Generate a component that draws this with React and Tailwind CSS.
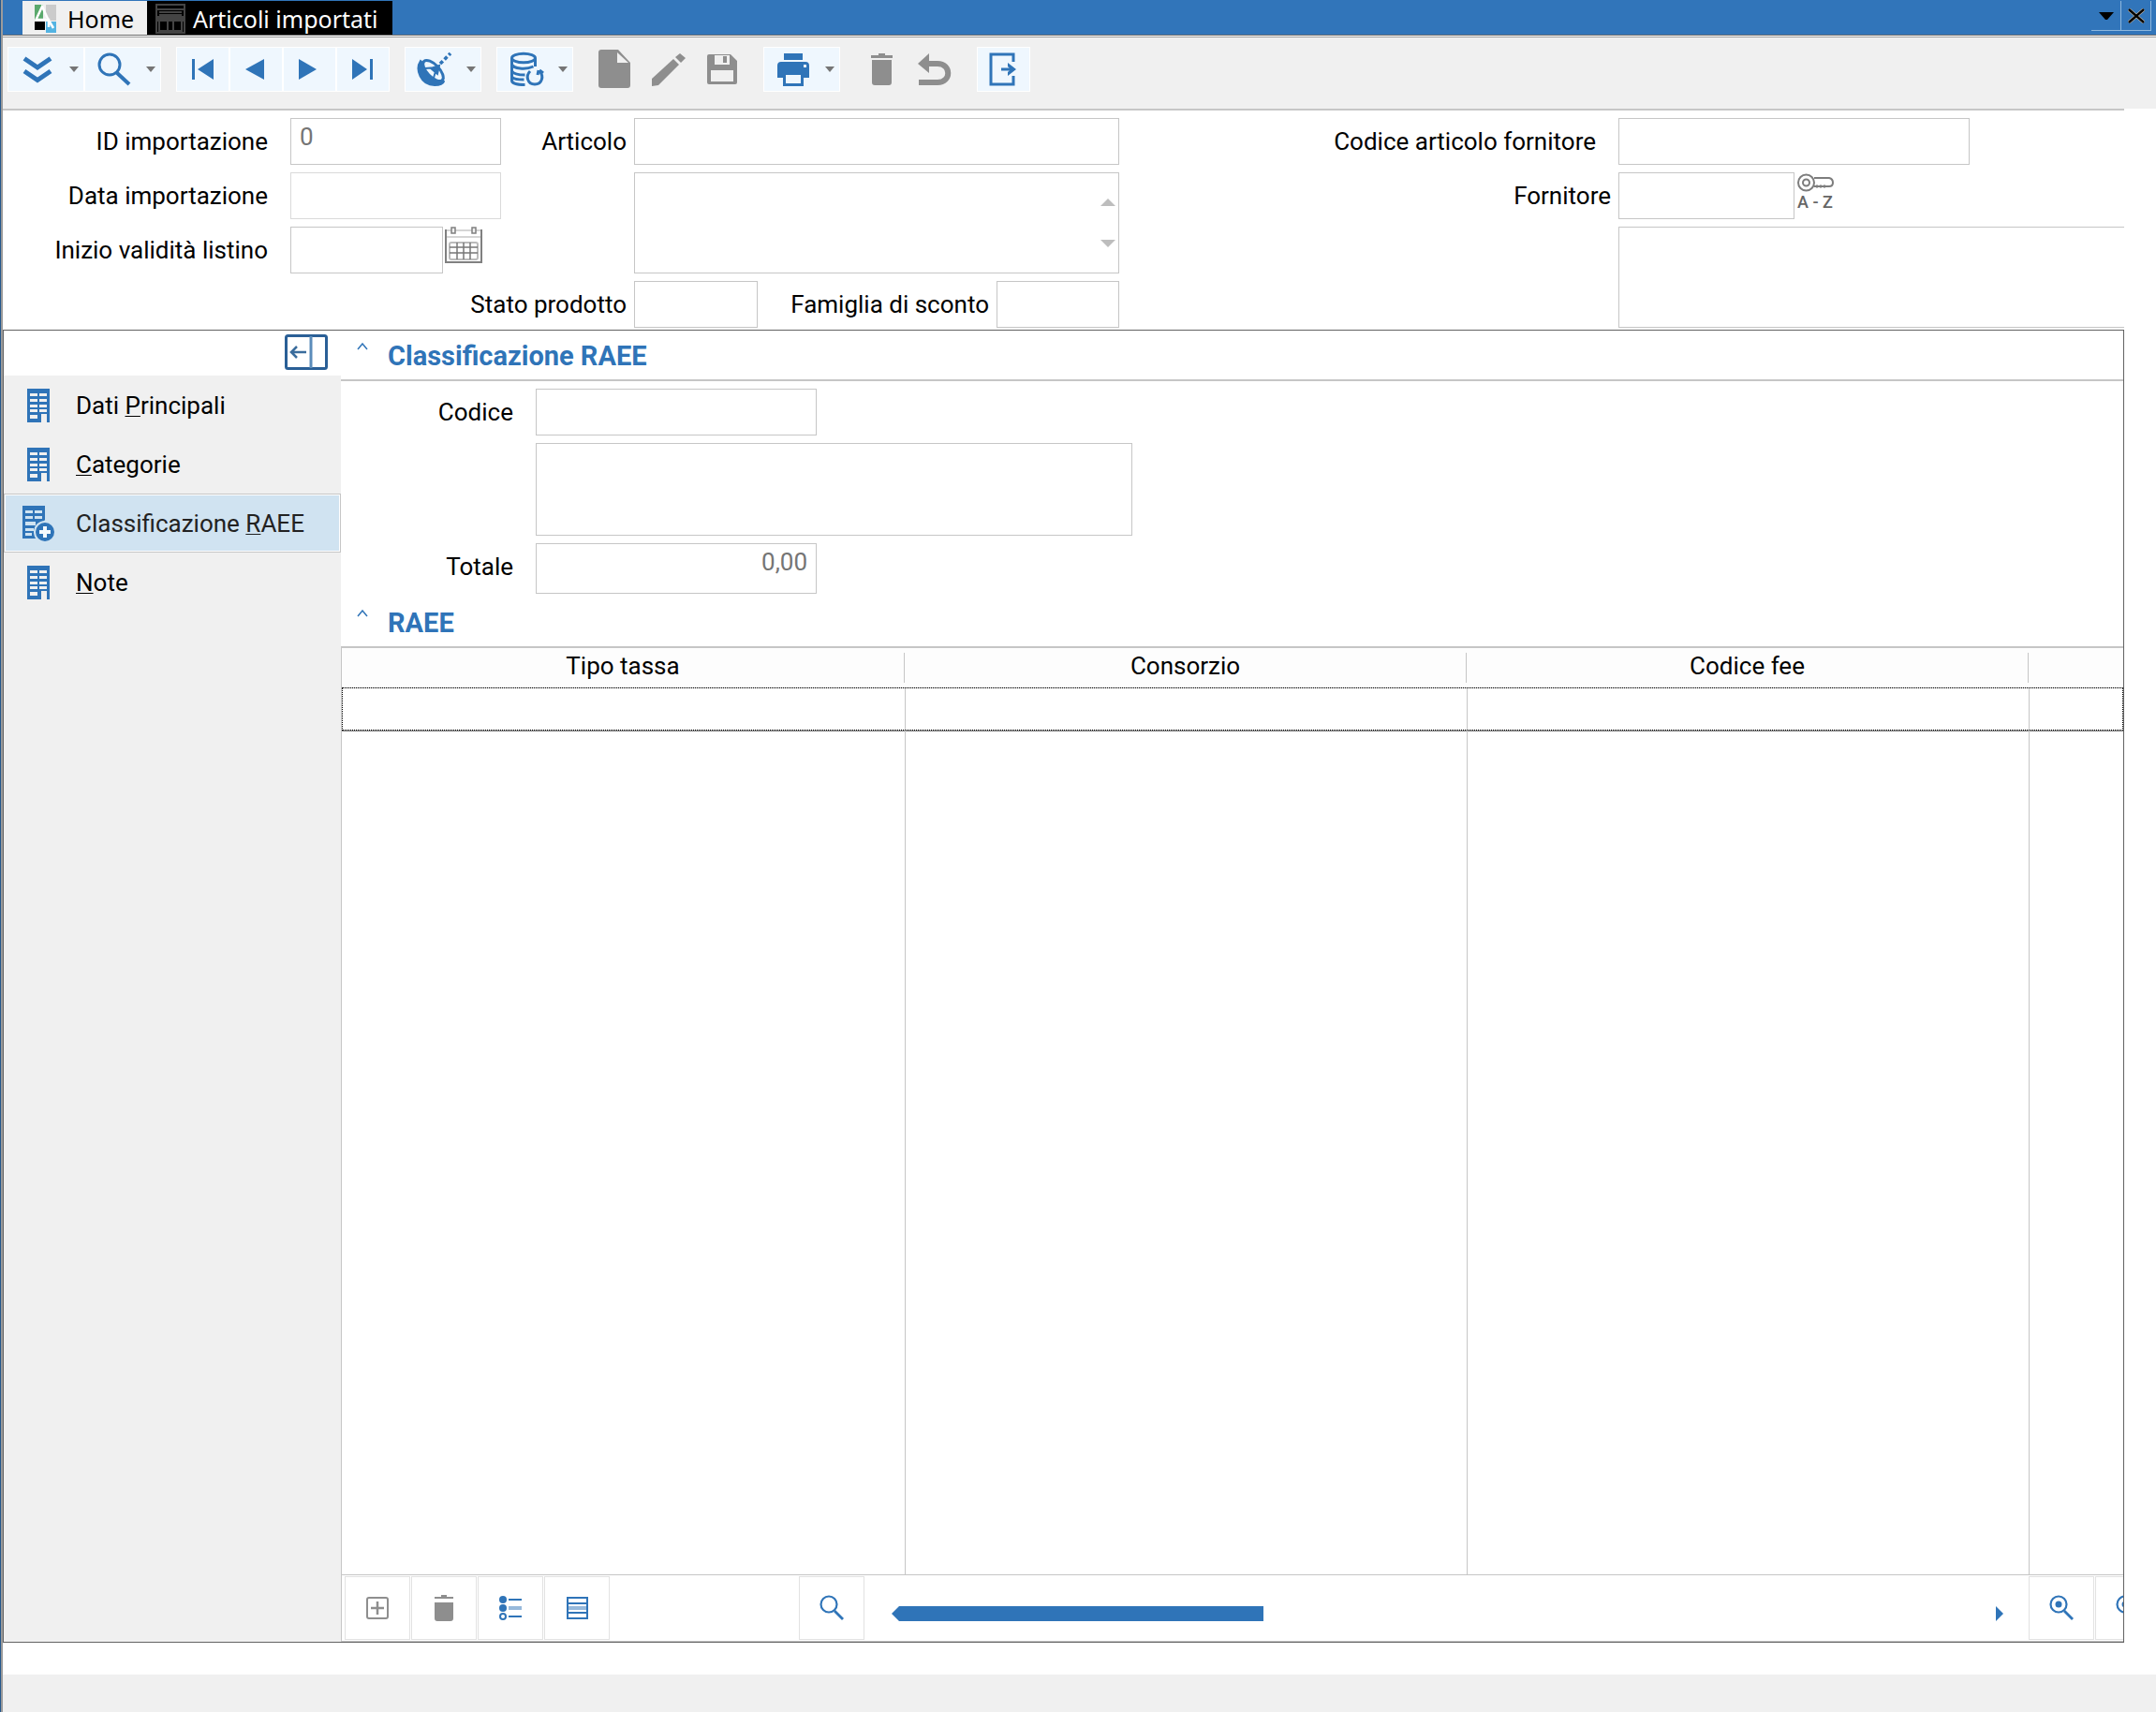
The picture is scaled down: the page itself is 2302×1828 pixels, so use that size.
const BLUE = "#2f74b8";
const GRAY = "#8e8e8e";

function Icon({ children, className = "h-10 w-10" }) {
  return (
    <svg viewBox="0 0 40 40" className={`shrink-0 ${className}`} fill="none" aria-hidden="true">
      {children}
    </svg>
  );
}

/* ---------- toolbar icons ---------- */

const icons = {
  expand: (
    <Icon>
      <path d="M6 8.5L20 18L34 8.5M6 22L20 31.5L34 22" stroke={BLUE} strokeWidth="5" />
    </Icon>
  ),
  search: (
    <Icon>
      <circle cx="15" cy="15" r="11" stroke={BLUE} strokeWidth="3" />
      <path d="M22 23L36 36" stroke={BLUE} strokeWidth="4" />
    </Icon>
  ),
  first: (
    <Icon>
      <path d="M8 9h3v22h-3zM31 9v22L14 20z" fill={BLUE} />
    </Icon>
  ),
  prev: (
    <Icon>
      <path d="M28 9v22L8 20z" fill={BLUE} />
    </Icon>
  ),
  next: (
    <Icon>
      <path d="M8 9v22L27 20z" fill={BLUE} />
    </Icon>
  ),
  last: (
    <Icon>
      <path d="M8 9v22L24 20zM27 9h3v22h-3z" fill={BLUE} />
    </Icon>
  ),
  satellite: (
    <Icon>
      <path d="M5 11C-1 20 5 37 20 37c5 0 9-1 10-4z" fill={BLUE} stroke={BLUE} strokeWidth="2" />
      <ellipse cx="18.5" cy="21.5" rx="14" ry="6.5" transform="rotate(46 18.5 21.5)" fill="#eff7fe" stroke={BLUE} strokeWidth="3" />
      <path d="M16 19l9-3-2 9zM10 19l12-1M22 19l-3 10" stroke={BLUE} strokeWidth="2" fill={BLUE} />
      <path d="M26 14L37 3" stroke={BLUE} strokeWidth="3.6" strokeDasharray="4 2.5" />
    </Icon>
  ),
  database: (
    <Icon>
      <ellipse cx="17" cy="8" rx="12.5" ry="4.8" stroke={BLUE} strokeWidth="3" />
      <path
        d="M4.5 8v24c0 3 6 4.500 14 4.500M29.500 8v9M4.500 15c2 4 14 6 23 2M4.500 22c2 3 7 4 14 4M4.500 28c2 3 7 3 13 3"
        stroke={BLUE}
        strokeWidth="3"
      />
      <path d="M24 22c-5 5-3 14 5 14s10-9 5-14M33 21l-1 5M34 21l4 3" stroke={BLUE} strokeWidth="3" />
    </Icon>
  ),
  file: (
    <Icon className="h-11 w-10">
      <path d="M5 -1h18l13 14v24q0 3-3 3H5q-3 0-3-3V2q0-3 3-3z" fill={GRAY} />
      <path d="M22 2v11h12z" fill="#f0f0f0" />
    </Icon>
  ),
  pencil: (
    <Icon>
      <path d="M2 38v-8L25 9l6 6L9 37z" fill={GRAY} />
      <path d="M27 7l5-4 6 5-5 5z" fill={GRAY} />
    </Icon>
  ),
  save: (
    <Icon>
      <path d="M6 4h23l7 7v23q0 2-2 2H6q-2 0-2-2V6q0-2 2-2z" fill={GRAY} />
      <path d="M12 5h16v10H12zM8 21h24v12H8z" fill="#f0f0f0" />
      <path d="M21 6h4v7h-4z" fill={GRAY} />
    </Icon>
  ),
  print: (
    <Icon>
      <path d="M10 3h20v7H10zM7 12h26q4 0 4 4v13h-6v9H9v-9H3V16q0-4 4-4z" fill={BLUE} />
      <path d="M12 26h16v9H12zM31 15h3v3h-3z" fill="#eff7fe" />
    </Icon>
  ),
  trash: (
    <Icon>
      <path d="M8 5h8V3h7v2h8v3H8zM9 10h21v24q0 3-3 3H12q-3 0-3-3z" fill={GRAY} />
    </Icon>
  ),
  undo: (
    <Icon>
      <path d="M2 34h20c15 0 15-20 0-20H9" stroke={GRAY} strokeWidth="6" />
      <path d="M1 14L13 3v21z" fill={GRAY} />
    </Icon>
  ),
  exit: (
    <Icon>
      <path d="M30 12V4H6v32h24v-9M17 20h12" stroke={BLUE} strokeWidth="3" />
      <path d="M24 13l9 7-9 7v-4l3-3-3-3z" fill={BLUE} />
    </Icon>
  ),
};

function Building() {
  return (
    <svg viewBox="0 0 26 36" className="h-9 w-[26px]" aria-hidden="true">
      <path d="M1 0h24v36h-3v-9h-6v9H1z" fill={BLUE} />
      <path
        d="M4 5h8v3H4zM14 5h8v3h-8zM4 11h8v3H4zM14 11h8v3h-8zM4 17h8v3H4zM14 17h8v3h-8zM4 22h8v3H4zM14 22h8v3h-8zM4 28h8v4H4z"
        fill="#f0f0f0"
      />
    </svg>
  );
}

function BuildingPlus() {
  return (
    <svg viewBox="0 0 36 40" className="h-10 w-9" aria-hidden="true">
      <path d="M1 1h24v15l-9 12v8H1z" fill={BLUE} />
      <path
        d="M4 6h8v3H4zM14 6h8v3h-8zM4 12h8v3H4zM14 12h8v3h-8zM4 18h11v4H4zM4 25h9v3H4zM4 30h7v3H4z"
        fill="#d0e3f1"
      />
      <circle cx="25" cy="29" r="12" fill="#d0e3f1" />
      <circle cx="25" cy="29" r="10" fill={BLUE} />
      <path d="M25 23v12M19 29h12" stroke="#f4f9fd" strokeWidth="4" />
    </svg>
  );
}

function Lens({ dot }) {
  return (
    <svg viewBox="0 0 28 28" className="h-7 w-7 shrink-0" fill="none" aria-hidden="true">
      <circle cx="11" cy="10" r="8.5" stroke={BLUE} strokeWidth="2.2" />
      <path d="M17 17l9 9" stroke={BLUE} strokeWidth="2.8" />
      {dot && <circle cx="11" cy="10" r="3.5" fill={BLUE} />}
    </svg>
  );
}

function Caret() {
  return (
    <svg viewBox="0 0 10 6" className="h-[6px] w-[10px] shrink-0" aria-hidden="true">
      <path d="M0 0h10L5 6z" fill="#757575" />
    </svg>
  );
}

/* ---------- toolbar ---------- */

function ToolButton({ icon, label, disabled }) {
  return (
    <button
      type="button"
      aria-label={label}
      disabled={disabled}
      className={`flex h-12 w-[57px] items-center justify-center border ${
        disabled ? "border-transparent" : "border-white bg-[#eff7fe]"
      }`}
    >
      {icons[icon]}
    </button>
  );
}

function SplitButton({ icon, label }) {
  return (
    <button
      type="button"
      aria-label={label}
      className="flex h-12 w-[82px] items-center gap-[14px] border border-white bg-[#eff7fe] pl-[11px]"
    >
      {icons[icon]}
      <Caret />
    </button>
  );
}

function Toolbar() {
  return (
    <div className="flex h-[77px] shrink-0 items-start gap-4 border-t border-[#9b9b9b] bg-[#f0f0f0] px-[5px] pt-[10px]">
      <div className="flex">
        <SplitButton icon="expand" label="Espandi" />
        <SplitButton icon="search" label="Cerca" />
      </div>
      <div className="flex">
        <ToolButton icon="first" label="Primo" />
        <ToolButton icon="prev" label="Precedente" />
        <ToolButton icon="next" label="Successivo" />
        <ToolButton icon="last" label="Ultimo" />
      </div>
      <SplitButton icon="satellite" label="Collegamenti" />
      <SplitButton icon="database" label="Aggiorna dati" />
      <div className="flex">
        <ToolButton icon="file" label="Nuovo" disabled />
        <ToolButton icon="pencil" label="Modifica" disabled />
        <ToolButton icon="save" label="Salva" disabled />
      </div>
      <SplitButton icon="print" label="Stampa" />
      <div className="flex">
        <ToolButton icon="trash" label="Elimina" disabled />
        <ToolButton icon="undo" label="Annulla" disabled />
      </div>
      <ToolButton icon="exit" label="Esci" />
    </div>
  );
}

/* ---------- title tabs ---------- */

function TabBar() {
  return (
    <div className="flex h-[37px] shrink-0 items-stretch bg-[#3175ba] pl-[21px] pt-px font-['Noto_Sans',sans-serif] text-[25px]">
      <button type="button" className="flex w-[133px] items-center gap-3 bg-[#f0f0f0] pt-px pl-3">
        <svg viewBox="0 0 24 32" className="h-8 w-6" aria-hidden="true">
          <path d="M1 1h9v17H1z" fill="#5aa96c" />
          <path d="M13 1h11v17H13z" fill="#cbcbcb" />
          <path d="M1 19h11v9H1z" fill="#000" />
          <path d="M13 19h11v12H13z" fill="#53b3e2" />
          <path d="M2 18L9 3l6 13 6 10M3 17h13v8" stroke="#fff" strokeWidth="2.5" fill="none" />
        </svg>
        <span>Home</span>
      </button>
      <button type="button" className="flex w-[262px] items-center gap-2 bg-black pt-px pl-[9px] text-white">
        <svg viewBox="0 0 32 32" className="h-8 w-8" fill="none" stroke="#444" strokeWidth="2" aria-hidden="true">
          <path d="M1 1h30v30H1zM1 6h30M4 9h24M4 12h24" />
          <path d="M3 14h26v4H3z" fill="#444" />
          <path d="M13 18h6v12M13 18v12M4 18v12M28 18v12M4 29h24" />
        </svg>
        <span className="whitespace-nowrap">Articoli importati</span>
      </button>
      <div className="ml-auto flex pr-[5px] pb-1">
        <button
          type="button"
          aria-label="Elenco finestre"
          className="flex w-8 items-center justify-center border-r border-b border-[#8fb8de]"
        >
          <svg viewBox="0 0 16 8" className="h-2 w-4" aria-hidden="true">
            <path d="M0 0h16L9 8H7z" fill="#000" />
          </svg>
        </button>
        <button
          type="button"
          aria-label="Chiudi"
          className="flex w-8 items-center justify-center border-r border-b border-[#8fb8de]"
        >
          <svg viewBox="0 0 18 16" className="h-4 w-[18px]" aria-hidden="true">
            <path d="M1 1l16 14M17 1L1 15" stroke="#d9c3a8" strokeWidth="3.5" />
            <path d="M1 1l16 14M17 1L1 15" stroke="#000" strokeWidth="2.5" />
          </svg>
        </button>
      </div>
    </div>
  );
}

/* ---------- header form ---------- */

const box = "border border-[#c6c6c6] bg-white outline-none resize-none";

function Label({ htmlFor, children, className = "pr-2" }) {
  return (
    <label htmlFor={htmlFor} className={`flex items-center justify-end whitespace-nowrap ${className}`}>
      {children}
    </label>
  );
}

function HeaderForm() {
  return (
    <div className="mr-[34px] border-t-2 border-[#c6c6c6] pt-2 pb-[2px]">
      <div className="grid grid-cols-[307px_225px_142px_518px_533px_1fr] grid-rows-[50px_50px_50px_50px] gap-y-2">
        <Label htmlFor="id-imp" className="pr-6">ID importazione</Label>
        <input id="id-imp" defaultValue="0" className={`${box} px-[9px] pb-[10px] text-[#757575]`} />
        <Label htmlFor="articolo">Articolo</Label>
        <input id="articolo" className={box} />
        <Label htmlFor="cod-forn" className="pr-6">Codice articolo fornitore</Label>
        <input id="cod-forn" className={`${box} w-[375px]`} />

        <Label htmlFor="data-imp" className="pr-6">Data importazione</Label>
        <input id="data-imp" className="border border-[#dadada] bg-white" />
        <div className="relative col-start-4 row-span-2 flex">
          <textarea aria-label="Descrizione articolo" className={`${box} flex-1`} />
          <div className="absolute top-0 right-1 flex h-full flex-col items-center justify-center gap-9">
            <svg viewBox="0 0 16 8" className="h-2 w-4" aria-hidden="true">
              <path d="M8 0l8 8H0z" fill="#bdbdbd" />
            </svg>
            <svg viewBox="0 0 16 8" className="h-2 w-4" aria-hidden="true">
              <path d="M0 0h16L8 8z" fill="#bdbdbd" />
            </svg>
          </div>
        </div>
        <Label htmlFor="fornitore">Fornitore</Label>
        <div className="flex gap-[2px]">
          <input id="fornitore" className={`${box} w-[188px]`} />
          <button type="button" aria-label="Ricerca fornitore" className="flex flex-col items-center">
            <svg viewBox="0 0 40 22" className="h-[22px] w-10" fill="none" stroke="#7d7d7d" aria-hidden="true">
              <circle cx="10.5" cy="11" r="8.5" strokeWidth="2" />
              <circle cx="10.5" cy="11" r="3.5" strokeWidth="2" />
              <path d="M19 6h16q4 1 4 5q0 4-4 4H19" strokeWidth="2" />
              <path d="M21 15h12" strokeWidth="3" strokeDasharray="2 2" />
            </svg>
            <span className="text-lg leading-5 font-medium whitespace-pre text-[#666]">A - Z</span>
          </button>
        </div>

        <Label htmlFor="inizio" className="col-start-1 row-start-3 pr-6">Inizio validità listino</Label>
        <div className="row-start-3 flex gap-[2px]">
          <input id="inizio" className={`${box} w-[163px]`} />
          <button type="button" aria-label="Calendario" className="self-start">
            <svg viewBox="0 0 40 40" className="h-10 w-10" fill="none" stroke="#808080" aria-hidden="true">
              <path d="M1 3v35h38V3" strokeWidth="2" />
              <path d="M2 4h36M2 11h36" stroke="#d5d5d5" strokeWidth="2" />
              <path d="M7 1h4v6H7zM29 1h4v6h-4z" fill="#eee" strokeWidth="1.5" />
              <rect x="5" y="17" width="30" height="18" rx="2" stroke="#bbb" strokeWidth="2" />
              <path d="M5 22h30M5 28h30M13 17v18M20 17v18M27 17v18" stroke="#777" strokeWidth="1.5" />
            </svg>
          </button>
        </div>
        <textarea aria-label="Descrizione fornitore" className={`${box} col-start-6 row-span-2 row-start-3 border-r-0`} />

        <Label htmlFor="stato" className="col-span-2 col-start-2 row-start-4 pr-2">Stato prodotto</Label>
        <div className="col-start-4 row-start-4 flex">
          <input id="stato" className={`${box} w-[132px]`} />
          <Label htmlFor="famiglia" className="flex-1 pr-2">Famiglia di sconto</Label>
          <input id="famiglia" className={`${box} w-[131px]`} />
        </div>
      </div>
    </div>
  );
}

/* ---------- side navigation ---------- */

const pages = [
  { before: "Dati ", key: "P", after: "rincipali" },
  { before: "", key: "C", after: "ategorie" },
  { before: "Classificazione ", key: "R", after: "AEE", active: true },
  { before: "", key: "N", after: "ote" },
];

function SideNav() {
  return (
    <nav className="flex w-[360px] shrink-0 flex-col bg-[#f0f0f0]">
      <div className="flex h-12 justify-end bg-white pt-1 pr-[14px]">
        <button type="button" aria-label="Comprimi menu" className="self-start">
          <svg viewBox="0 0 46 38" className="h-[38px] w-[46px]" fill="none" aria-hidden="true">
            <rect x="1.5" y="1.5" width="43" height="35" rx="2" stroke="#2a5f96" strokeWidth="3" />
            <path d="M28 2v34" stroke="#5b8cba" strokeWidth="3" />
            <path d="M23 19H8M13 13l-6 6 6 6" stroke="#3a6c9c" strokeWidth="2.5" />
          </svg>
        </button>
      </div>
      {pages.map((page) => (
        <button
          key={page.key}
          type="button"
          className={`flex h-[63px] items-center text-left ${
            page.active ? "border border-[#c6c6c6] bg-[#d0e3f1] text-[#222] shadow-[inset_0_0_0_1px_white]" : "border border-transparent"
          }`}
        >
          <span className="flex w-[76px] justify-center pr-1">{page.active ? <BuildingPlus /> : <Building />}</span>
          <span>
            {page.before}
            <span className="underline decoration-1 underline-offset-2">{page.key}</span>
            {page.after}
          </span>
        </button>
      ))}
    </nav>
  );
}

/* ---------- content ---------- */

function SectionTitle({ children }) {
  return (
    <h2 className="flex h-[54px] shrink-0 items-center border-b-2 border-[#c6c6c6] pt-px pl-[17px] text-[29px] font-bold text-[#2f74b8]">
      <button type="button" aria-label="Comprimi sezione" className="mr-[21px] self-start pt-3">
        <svg viewBox="0 0 12 8" className="h-2 w-3" fill="none" aria-hidden="true">
          <path d="M1 7l5-6 5 6" stroke={BLUE} strokeWidth="1.5" />
        </svg>
      </button>
      {children}
    </h2>
  );
}

const columns = ["Tipo tassa", "Consorzio", "Codice fee"];

function RaeeTable() {
  return (
    <table className="h-full w-full table-fixed border-collapse">
      <colgroup>
        <col className="w-[601px]" />
        <col className="w-[600px]" />
        <col className="w-[600px]" />
        <col />
      </colgroup>
      <thead>
        <tr className="h-[42px] border-b border-[#c6c6c6] bg-[#fdfdfd]">
          {columns.map((name) => (
            <th key={name} className="p-0 font-normal">
              <div className="flex h-8 items-center justify-center border-r border-[#c6c6c6] pb-1">{name}</div>
            </th>
          ))}
          <th aria-hidden="true" />
        </tr>
      </thead>
      <tbody>
        <tr className="h-[46px] outline-1 -outline-offset-1 outline-black outline-dotted">
          <td className="border-r border-[#c6c6c6]" />
          <td className="border-r border-[#c6c6c6]" />
          <td className="border-r border-[#c6c6c6]" />
          <td />
        </tr>
        <tr>
          <td className="border-t border-r border-t-[#777] border-r-[#c6c6c6]" />
          <td className="border-t border-r border-t-[#777] border-r-[#c6c6c6]" />
          <td className="border-t border-r border-t-[#777] border-r-[#c6c6c6]" />
          <td className="border-t border-t-[#777]" />
        </tr>
      </tbody>
    </table>
  );
}

function GridButton({ label, children }) {
  return (
    <button
      type="button"
      aria-label={label}
      className="flex h-[68px] w-[70px] shrink-0 items-center justify-center border border-[#e2e2e2]"
    >
      {children}
    </button>
  );
}

function GridFooter() {
  return (
    <div className="flex h-[71px] shrink-0 items-center overflow-hidden border-t border-[#c6c6c6] pl-[3px]">
      <div className="flex gap-px">
        <GridButton label="Aggiungi riga">
          <svg viewBox="0 0 24 24" className="h-6 w-6" fill="none" stroke={GRAY} strokeWidth="2" aria-hidden="true">
            <rect x="1" y="1" width="22" height="22" rx="2" />
            <path d="M12 5v14M5 12h14" strokeWidth="2.5" />
          </svg>
        </GridButton>
        <GridButton label="Elimina riga">
          <svg viewBox="0 0 24 28" className="h-7 w-6" fill={GRAY} aria-hidden="true">
            <path d="M2 2h7V0h6v2h7v2H2zM2 8h20v17q0 3-3 3H5q-3 0-3-3z" />
          </svg>
        </GridButton>
        <GridButton label="Elenco">
          <svg viewBox="0 0 26 28" className="h-7 w-[26px]" fill={BLUE} aria-hidden="true">
            <circle cx="5" cy="5" r="4" />
            <circle cx="5" cy="14" r="4" />
            <circle cx="5" cy="23" r="3" fill="none" stroke={BLUE} strokeWidth="2" />
            <path d="M11 4h14v2H11zM11 22h14v2H11z" />
            <path d="M11 12h14v4H11z" opacity="0.5" />
          </svg>
        </GridButton>
        <GridButton label="Scheda">
          <svg viewBox="0 0 24 26" className="h-[26px] w-6" fill="none" stroke={BLUE} strokeWidth="2" aria-hidden="true">
            <path d="M2 2h21v22H2zM2 8h21M2 18h21" />
            <path d="M3 13h19" strokeWidth="4" opacity="0.5" />
          </svg>
        </GridButton>
      </div>
      <div className="ml-[202px]">
        <GridButton label="Cerca nella griglia">
          <Lens />
        </GridButton>
      </div>
      <div className="flex flex-1 items-center pt-3 pr-[27px] pl-[29px]">
        <button type="button" aria-label="Scorri a sinistra">
          <svg viewBox="0 0 8 16" className="h-4 w-2" aria-hidden="true">
            <path d="M8 0v16L0 8z" fill={BLUE} />
          </svg>
        </button>
        <div className="h-4 flex-1">
          <div className="h-4 w-[389px] bg-[#2f74b8]" />
        </div>
        <button type="button" aria-label="Scorri a destra">
          <svg viewBox="0 0 8 16" className="h-4 w-2" aria-hidden="true">
            <path d="M0 0v16l8-8z" fill={BLUE} />
          </svg>
        </button>
      </div>
      <div className="flex w-[101px] gap-px overflow-hidden">
        <GridButton label="Ingrandisci">
          <Lens dot />
        </GridButton>
        <GridButton label="Riduci">
          <Lens dot />
        </GridButton>
      </div>
    </div>
  );
}

function Content() {
  return (
    <div className="flex min-w-0 flex-1 flex-col">
      <SectionTitle>Classificazione RAEE</SectionTitle>
      <div className="grid shrink-0 grid-cols-[208px_1fr] gap-y-2 pt-2">
        <Label htmlFor="codice" className="pr-6">Codice</Label>
        <input id="codice" className={`${box} h-[50px] w-[300px]`} />
        <textarea aria-label="Descrizione classificazione" className={`${box} col-start-2 h-[99px] w-[637px]`} />
        <Label htmlFor="totale" className="pr-6 pb-1">Totale</Label>
        <input
          id="totale"
          defaultValue="0,00"
          className={`${box} h-[54px] w-[300px] px-[9px] pb-[14px] text-right text-[#757575]`}
        />
      </div>
      <div className="h-1 shrink-0" />
      <SectionTitle>RAEE</SectionTitle>
      <div className="flex min-h-0 flex-1 flex-col border-b border-l border-[#c6c6c6]">
        <div className="min-h-0 flex-1">
          <RaeeTable />
        </div>
        <GridFooter />
      </div>
    </div>
  );
}

export default function App() {
  return (
    <div className="border-l border-[#24588c] bg-white font-[Roboto,sans-serif] text-[26px] leading-8 text-black">
      <div className="flex h-screen flex-col border-l-2 border-[#9b9b9b]">
        <TabBar />
        <div className="h-[2px] shrink-0 border-t border-[#6b6b6b] bg-white" />
        <Toolbar />
        <HeaderForm />
        <main className="mr-[34px] flex min-h-0 flex-1 border border-[#626262]">
          <SideNav />
          <Content />
        </main>
        <div className="h-[34px] shrink-0" />
        <footer className="h-10 shrink-0 bg-[#f0f0f0]" />
      </div>
    </div>
  );
}
